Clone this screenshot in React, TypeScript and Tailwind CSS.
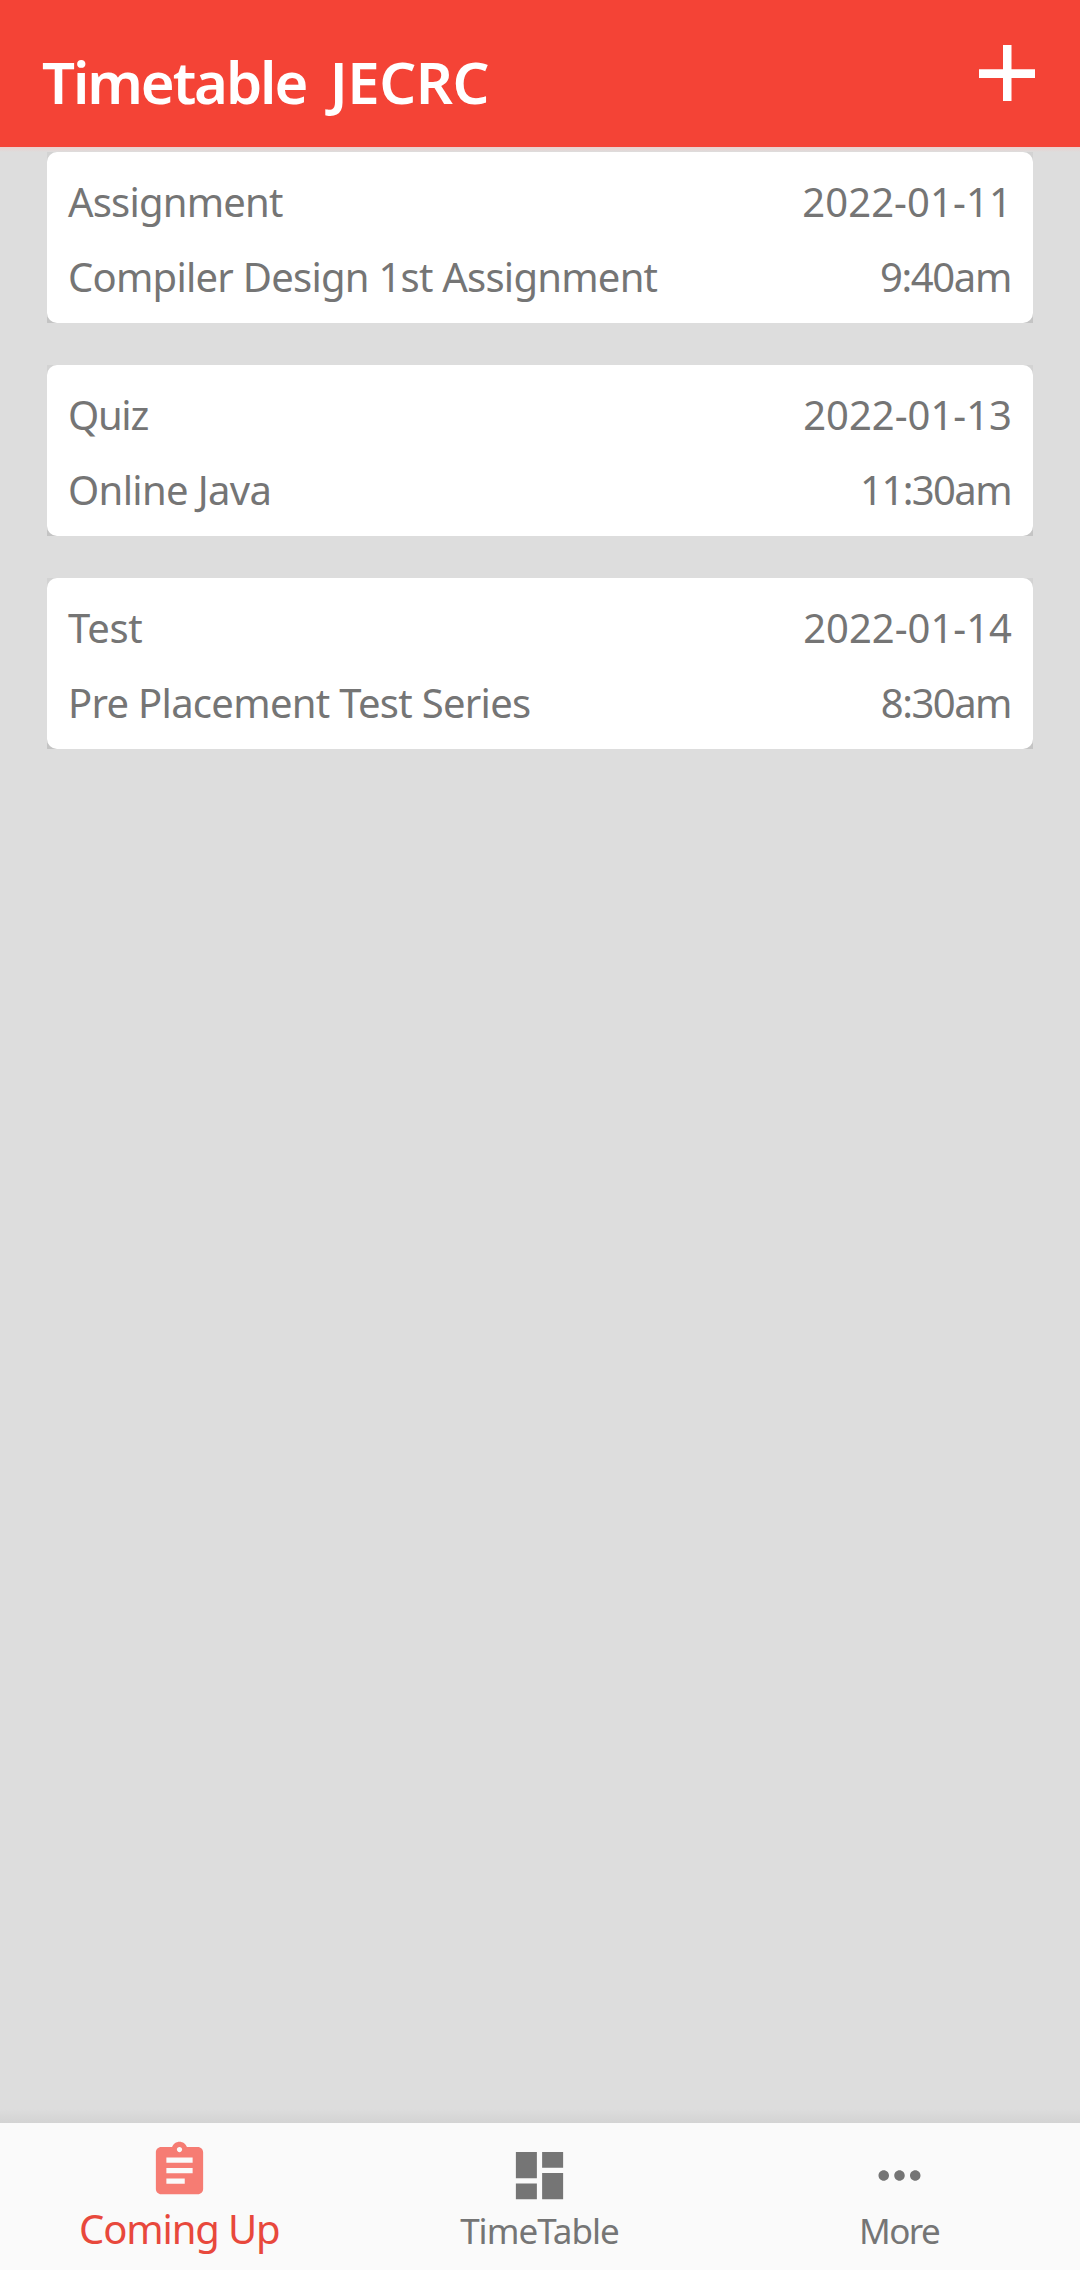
import type { ReactNode } from 'react';

type Entry = {
  kind: string;
  kindTracking: string;
  title: string;
  titleTracking: string;
  date: string;
  dateTracking: string;
  time: string;
  timeTracking: string;
};

const entries: Entry[] = [
  {
    kind: 'Assignment',
    kindTracking: 'tracking-[-0.8px]',
    title: 'Compiler Design 1st Assignment',
    titleTracking: 'tracking-[-0.76px]',
    date: '2022-01-11',
    dateTracking: '-mr-px tracking-[0.1px]',
    time: '9:40am',
    timeTracking: 'tracking-[-1.36px]',
  },
  {
    kind: 'Quiz',
    kindTracking: 'tracking-[-1.3px]',
    title: 'Online Java',
    titleTracking: 'tracking-[-0.65px]',
    date: '2022-01-13',
    dateTracking: '-mr-px tracking-[0px]',
    time: '11:30am',
    timeTracking: 'tracking-[-1.6px]',
  },
  {
    kind: 'Test',
    kindTracking: 'tracking-[-0.3px]',
    title: 'Pre Placement Test Series',
    titleTracking: 'tracking-[-0.71px]',
    date: '2022-01-14',
    dateTracking: '-mr-px tracking-[0px]',
    time: '8:30am',
    timeTracking: 'tracking-[-1.5px]',
  },
];

function EntryCard({ entry }: { entry: Entry }) {
  return (
    <article className="bg-linear-to-b from-[#d3d3d3] to-[#c4c4c4]">
      <div className="h-[171px] rounded-[10px] bg-white pt-3 pr-[22px] pl-[21px] text-[40px] leading-[75px] text-[#757575]">
        <div className="flex justify-between whitespace-nowrap">
          <span className={entry.kindTracking}>{entry.kind}</span>
          <span className={entry.dateTracking}>{entry.date}</span>
        </div>
        <div className="flex justify-between whitespace-nowrap">
          <span className={entry.titleTracking}>{entry.title}</span>
          <span className={entry.timeTracking}>{entry.time}</span>
        </div>
      </div>
    </article>
  );
}

function Icon({ className, children }: { className: string; children: ReactNode }) {
  return (
    <svg viewBox="0 0 24 24" className={`size-[63px] fill-current ${className}`} aria-hidden="true">
      {children}
    </svg>
  );
}

export default function App() {
  return (
    <div className="flex h-[2270px] w-[1080px] flex-col overflow-hidden bg-[#dddddd] font-['Noto_Sans',sans-serif]">
      <header className="flex h-[147px] shrink-0 items-start justify-between bg-[#f44336] pr-[45px] pl-[42px] text-white">
        <h1 className="mt-[52px] text-[58px] leading-[60px] font-semibold tracking-[-0.5px] [word-spacing:9px]">
          <span className="tracking-[-2.1px]">Timetable</span> JECRC
        </h1>
        <button type="button" aria-label="Add" className="mt-[45px]">
          <svg viewBox="0 0 56 56" className="size-[56px] fill-current" aria-hidden="true">
            <path d="M24 0h8.500v24.300H56V33H32.500v23H24V33H0v-8.700h24z" />
          </svg>
        </button>
      </header>
      <div className="h-[5px] shrink-0 bg-linear-to-b from-[#ebcfcc] to-[#dddddd]" />

      <main className="flex flex-1 flex-col gap-[42px] px-[47px]">
        {entries.map((entry) => (
          <EntryCard key={entry.date} entry={entry} />
        ))}
      </main>

      <div className="h-[14px] shrink-0 bg-linear-to-b from-[#dddddd] to-[#d3d3d3]" />
      <nav className="grid h-[147px] shrink-0 grid-cols-3 bg-[#fafafa] pr-px text-[#757575]">
        <div className="flex flex-col items-center pt-4 pr-px">
          <Icon className="text-[#f67c73]">
            <path d="M19 3h-4.180C14.400 1.840 13.300 1 12 1c-1.300 0-2.400.840-2.820 2H5c-1.100 0-2 .9-2 2v14c0 1.100.9 2 2 2h14c1.100 0 2-.9 2-2V5c0-1.100-.9-2-2-2zm-7 0c.55 0 1 .45 1 1s-.45 1-1 1-1-.45-1-1 .45-1 1-1zm2 14H7v-2h7v2zm3-4H7v-2h10v2zm0-4H7V7h10v2z" />
          </Icon>
          <span className="mt-[7px] text-[40px] leading-10 tracking-[-1.14px] text-[#e8483c]">Coming Up</span>
        </div>
        <div className="flex flex-col items-center pt-[21px]">
          <Icon className="text-[#757575]">
            <path d="M3 13h8V3H3v10zm0 8h8v-6H3v6zm10 0h8V11h-8v10zm0-18v6h8V3h-8z" />
          </Icon>
          <span className="mt-1 text-[35px] leading-10 tracking-[-0.98px]">TimeTable</span>
        </div>
        <div className="flex flex-col items-center pt-[21px]">
          <Icon className="text-[#757575]">
            <path d="M6 10c-1.100 0-2 .9-2 2s.9 2 2 2 2-.9 2-2-.9-2-2-2zm12 0c-1.100 0-2 .9-2 2s.9 2 2 2 2-.9 2-2-.9-2-2-2zm-6 0c-1.100 0-2 .9-2 2s.9 2 2 2 2-.9 2-2-.9-2-2-2z" />
          </Icon>
          <span className="mt-1 text-[35px] leading-10 tracking-[-1.5px]">More</span>
        </div>
      </nav>
    </div>
  );
}
